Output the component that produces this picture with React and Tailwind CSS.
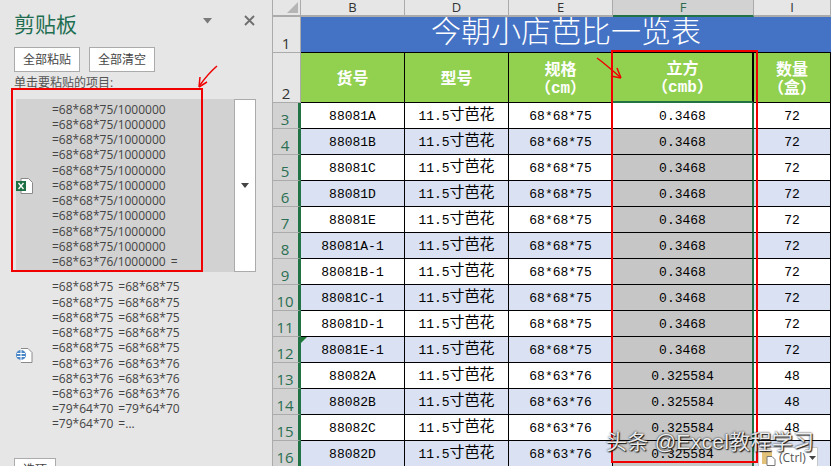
const tableFont = { fontFamily: '"Liberation Mono","Noto Sans CJK SC",monospace' };
const uiFont = { fontFamily: '"Open Sans","Noto Sans CJK SC",sans-serif' };

const rows = [
  ["3", "88081A", "68*68*75", "0.3468", "72"],
  ["4", "88081B", "68*68*75", "0.3468", "72"],
  ["5", "88081C", "68*68*75", "0.3468", "72"],
  ["6", "88081D", "68*68*75", "0.3468", "72"],
  ["7", "88081E", "68*68*75", "0.3468", "72"],
  ["8", "88081A-1", "68*68*75", "0.3468", "72"],
  ["9", "88081B-1", "68*68*75", "0.3468", "72"],
  ["10", "88081C-1", "68*68*75", "0.3468", "72"],
  ["11", "88081D-1", "68*68*75", "0.3468", "72"],
  ["12", "88081E-1", "68*68*75", "0.3468", "72"],
  ["13", "88082A", "68*63*76", "0.325584", "48"],
  ["14", "88082B", "68*63*76", "0.325584", "48"],
  ["15", "88082C", "68*63*76", "0.325584", "48"],
  ["16", "88082D", "68*63*76", "0.325584", "48"],
];

const list1 = Array(10).fill("=68*68*75/1000000").concat("=68*63*76/1000000 =");
const list2 = [
  "=68*68*75 =68*68*75", "=68*68*75 =68*68*75", "=68*68*75 =68*68*75", "=68*68*75 =68*68*75", "=68*68*75 =68*68*75",
  "=68*63*76 =68*63*76", "=68*63*76 =68*63*76", "=68*63*76 =68*63*76", "=79*64*70 =79*64*70", "=79*64*70 =...",
];

function PanelButton({ children, w }) {
  return (
    <button className={`${w} h-[25px] bg-white border border-[#ababab] text-[12px] text-[#444444] flex items-center justify-center`}>
      {children}
    </button>
  );
}

function Panel() {
  return (
    <div className="w-[272px] h-[466px] shrink-0 bg-[#e6e6e6] flex flex-col overflow-hidden text-[#444444]" style={uiFont}>
      <div className="h-[47px] shrink-0 flex items-start pl-[14px] pr-[17px] pt-[9px]">
        <span className="text-[21px] leading-[30px] text-[#1f6e52] flex-1">剪贴板</span>
        <svg width="10" height="6" viewBox="0 0 10 6" className="mt-[9px] mr-[31px]"><path d="M0 0h9L4.500 5.500z" fill="#7a7a7a" /></svg>
        <svg width="11" height="11" viewBox="0 0 11 11" className="mt-[6px]"><path d="M1 1l9 9M10 1l-9 9" stroke="#6e6e6e" strokeWidth="1.800" /></svg>
      </div>
      <div className="flex gap-[9px] pl-[14px] shrink-0">
        <PanelButton w="w-[66px]">全部粘贴</PanelButton>
        <PanelButton w="w-[66px]">全部清空</PanelButton>
      </div>
      <div className="pl-[14px] mt-[2px] h-[25px] shrink-0 text-[12px] leading-[18px] text-[#555555]">单击要粘贴的项目:</div>
      <div className="flex pl-[16px] h-[173px] shrink-0">
        <div className="w-[218px] bg-[#d2d2d2] flex items-center">
          <svg width="17" height="16" viewBox="0 0 17 16" className="shrink-0">
            <path d="M5 .500h7.500l4 4v11H5z" fill="#fff" stroke="#8a8a8a" />
            <rect x="0" y="3" width="10" height="10" fill="#1e7145" />
            <path d="M2.500 5l5 6M7.500 5l-5 6" stroke="#fff" strokeWidth="1.300" />
          </svg>
          <div className="ml-[19px] text-[12px] leading-[15.2px] whitespace-pre [word-spacing:2px]">
            {list1.map((t, i) => <div key={i}>{t}</div>)}
          </div>
        </div>
        <div className="w-[22px] bg-white border border-[#ababab] flex items-center justify-center">
          <svg width="8" height="5" viewBox="0 0 8 5"><path d="M0 0h8L4 5z" fill="#444" /></svg>
        </div>
      </div>
      <div className="flex items-center pl-[16px] mt-[2px] h-[163px] shrink-0">
        <svg width="17" height="17" viewBox="0 0 17 17" className="shrink-0">
          <path d="M5 1.500h7l4 4v10H5" fill="#fff" stroke="#8a8a8a" />
          <circle cx="5" cy="8" r="5" fill="#4a86c8" />
          <path d="M1 6.500h8M1 9.500h8M5 3v10" stroke="#fff" />
        </svg>
        <div className="ml-[19px] text-[12px] leading-[15.2px] whitespace-pre [word-spacing:2px]">
          {list2.map((t, i) => <div key={i}>{t}</div>)}
        </div>
      </div>
      <div className="pl-[14px] mt-[19px] shrink-0">
        <button className="w-[42px] h-[25px] bg-white border border-[#ababab] text-[12px] text-[#444444]">选项</button>
      </div>
    </div>
  );
}

function ColHead({ label, selected }) {
  return (
    <div className={`h-[17px] flex items-center justify-center text-[13px] leading-[15px] border-r border-b-2 ${selected ? "bg-[#d2d2d2] border-b-[#217346] border-r-[#ababab] text-[#2c6a4b]" : "bg-[#e6e6e6] border-b-[#ababab] border-r-[#ababab] text-[#333333]"}`} style={uiFont}>
      {label}
    </div>
  );
}

function RowHead({ n, selected, h }) {
  return (
    <div className={`${h} flex items-end justify-center pr-[1px] text-[15px] leading-[17px] border-b ${selected ? "bg-[#d2d2d2] text-[#2a6f52] border-b-[#ababab] border-r-[3px] border-r-[#217346]" : "bg-[#e6e6e6] text-[#333333] border-b-[#ababab] border-r border-r-[#ababab]"}`} style={uiFont}>
      {n}
    </div>
  );
}

function Cjk({ children }) {
  return <span className="text-[15px]">{children}</span>;
}

function Sheet() {
  return (
    <div className="flex-1 h-[466px] overflow-hidden bg-white border-l border-[#ababab] grid grid-cols-[28px_104px_104px_104px_141px_77px] content-start text-[13px] text-black" style={tableFont}>
      <div className="h-[17px] bg-[#e6e6e6] border-b-2 border-r border-[#ababab] flex items-end justify-end">
        <div className="w-0 h-0 mr-[2px] mb-[2px] border-l-[11px] border-b-[11px] border-l-transparent border-b-[#b5b5b5]" />
      </div>
      <ColHead label="B" />
      <ColHead label="D" />
      <ColHead label="E" />
      <ColHead label="F" selected />
      <ColHead label="I" />

      <RowHead n="1" h="h-[36px]" />
      <div className="col-span-5 h-[36px] overflow-hidden bg-[#4472c4] border-b border-black text-white text-[30px] leading-[35px] text-center font-light">今朝小店芭比一览表</div>

      <RowHead n="2" h="h-[50px]" />
      {[["货号"], ["型号"], ["规格", "（cm）"], ["立方", "（cmb）"], ["数量", "（盒）"]].map((lines, i) => (
        <div key={i} className={`h-[50px] pt-[4px] bg-[#92d050] text-white font-bold text-[16px] leading-[18px] flex flex-col items-center justify-center border-black ${i === 3 ? "border-b-2 border-b-[#217346] border-r-2" : "border-b border-r"}`}>
          {lines.map((l) => <div key={l}>{l}</div>)}
        </div>
      ))}

      {rows.map((r, i) => {
        const band = i % 2 === 1 ? "bg-[#d9e1f2]" : "bg-white";
        const cell = "h-[26px] pt-[2px] flex items-center justify-center border-b border-r border-black";
        return (
          <div key={r[0]} className="contents">
            <RowHead n={r[0]} selected h="h-[26px]" />
            <div className={`${cell} ${band} relative`}>
              {r[0] === "12" && <div className="absolute left-0 top-0 w-0 h-0 border-t-[6px] border-r-[6px] border-t-[#1e7a34] border-r-transparent" />}
              {r[1]}
            </div>
            <div className={`${cell} ${band}`}>11.5<Cjk>寸芭花</Cjk></div>
            <div className={`${cell} ${band}`}>{r[2]}</div>
            <div className={`h-[26px] pt-[2px] flex items-center justify-center border-b border-black border-r-2 border-r-[#217346] ${i === 0 ? "bg-white" : "bg-[#c6c6c6]"}`}>{r[3]}</div>
            <div className={`${cell} ${band}`}>{r[4]}</div>
          </div>
        );
      })}
    </div>
  );
}

export default function App() {
  return (
    <div className="relative w-[831px] h-[466px] flex overflow-hidden">
      <Panel />
      <Sheet />

      {/* red annotations, watermark and paste badge lie over the content */}
      <div className="absolute left-[11px] top-[88px] w-[192px] h-[184px] border-[2px] border-[#f00000]" />
      <div className="absolute left-[611px] top-[50px] w-[147px] h-[413px] border-[2px] border-[#f00000]" />
      <svg className="absolute left-0 top-0 pointer-events-none" width="831" height="466">
        <path d="M217 66C210 72 205 78 200 85" fill="none" stroke="#f00000" strokeWidth="1.500" />
        <path d="M199 87l1-10M199 87l8-5" fill="none" stroke="#f00000" strokeWidth="1.500" />
        <path d="M597 58C604 63 612 70 620 77" fill="none" stroke="#f00000" strokeWidth="1.500" />
        <path d="M621 78l-10-2M621 78l-4-10" fill="none" stroke="#f00000" strokeWidth="1.500" />
      </svg>
      <div className="absolute left-[758px] top-[447px] w-[60px] h-[20px] pt-[1px] bg-white border border-[#c8c8c8] flex items-center gap-[3px] pl-[3px] text-[12px] leading-[14px] text-[#555555]" style={uiFont}>
        <svg width="14" height="16" viewBox="0 0 14 16" className="shrink-0">
          <rect x="0" y="2" width="10" height="12" fill="#e3c27a" />
          <path d="M5 6.500h5l3 3v6H5z" fill="#fff" stroke="#777" />
        </svg>
        <span>(Ctrl)</span>
        <svg width="7" height="4" viewBox="0 0 7 4"><path d="M0 0h7L3.500 4z" fill="#444" /></svg>
      </div>
      <div className="absolute left-[606px] top-[429px] text-[21px] tracking-[0.3px] leading-[26px] text-white/90 whitespace-nowrap [text-shadow:0_0_2px_#000,1px_1px_1px_#222]" style={{ fontFamily: '"Liberation Sans","Noto Sans CJK SC",sans-serif' }}>头条 @Excel教程学习</div>
    </div>
  );
}
